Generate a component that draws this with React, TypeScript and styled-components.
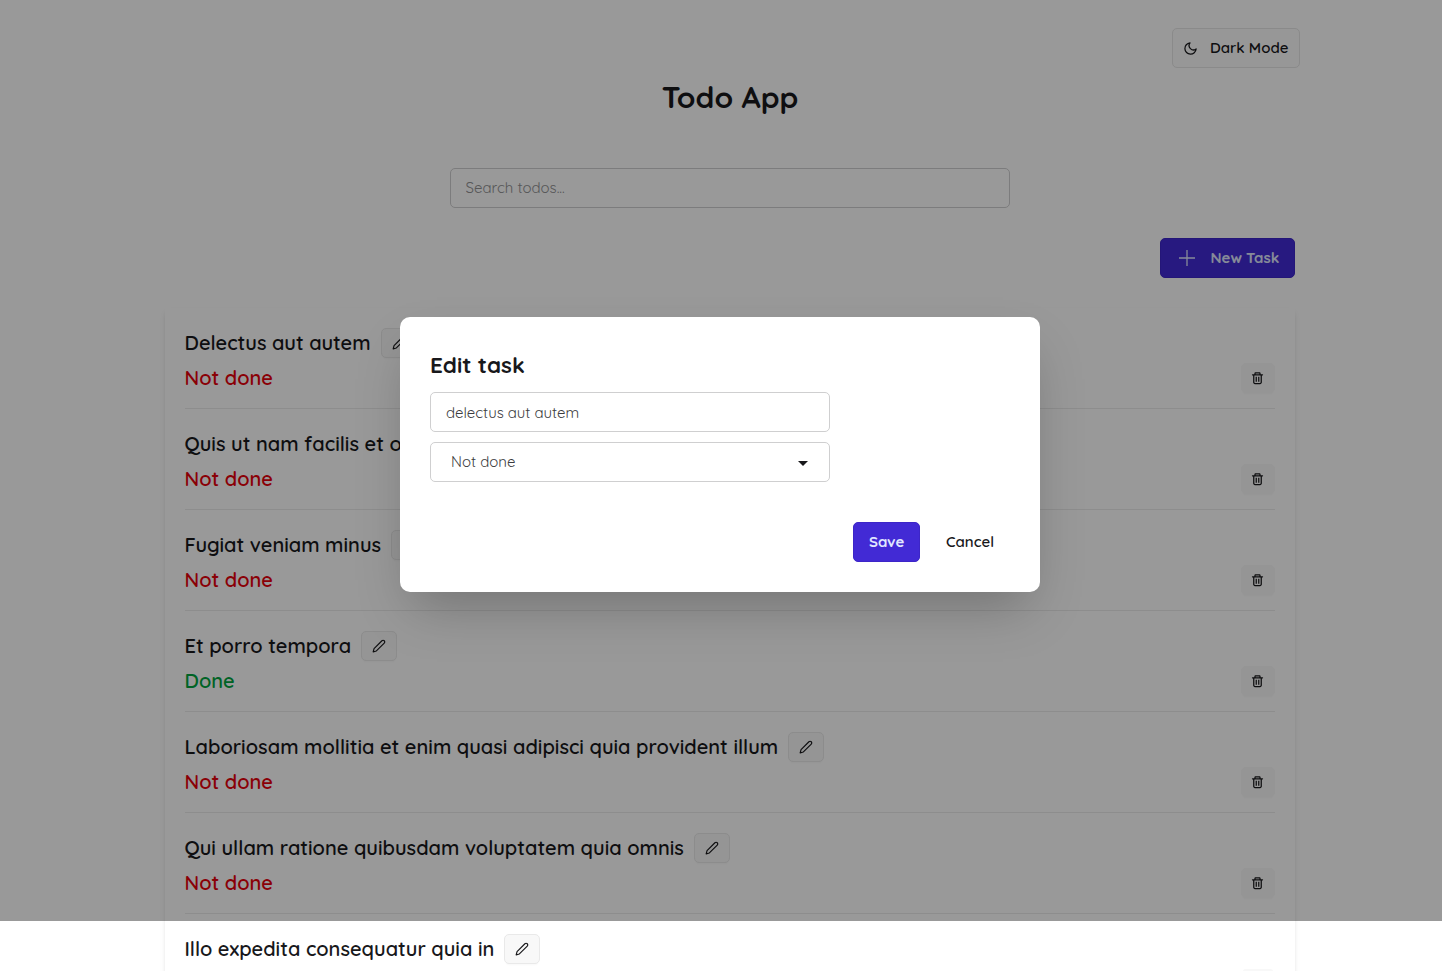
import React from "react";
import styled, { createGlobalStyle } from "styled-components";
import { FiMoon, FiEdit2 } from "react-icons/fi";
import { CgTrash } from "react-icons/cg";

const GlobalStyle = createGlobalStyle`
  *, *::before, *::after { box-sizing: border-box; }
  body {
    margin: 0;
    background: #ffffff;
    color: #18181b;
    font-family: Quicksand, Lato, sans-serif;
  }
  button, input { font-family: inherit; }
`;

const Page = styled.div`
  position: relative;
  height: 971px;
  overflow: hidden;
`;

const Content = styled.main`
  width: 1140px;
  margin-left: 160px;
  padding-top: 28px;
  display: flex;
  flex-direction: column;
`;

const Text = styled.span`
  white-space: nowrap;
`;

const Button = styled.button`
  height: 40px;
  display: inline-flex;
  align-items: center;
  border: 1px solid #e9e9e9;
  border-radius: 5px;
  background: #f8f8f8;
  color: #18181b;
  font-size: 15px;
  font-weight: 600;
  line-height: 20px;
`;

const ThemeButton = styled(Button)`
  width: 128px;
  padding: 0 0 0 10px;
  gap: 12px;
  align-self: flex-end;
  background: #fcfcfc;
  border-color: #e6e6e6;
`;

const PrimaryButton = styled(Button)<{ $width: number }>`
  width: ${({ $width }) => $width}px;
  padding: 0 0 0 15px;
  gap: 12.5px;
  background: #422ad5;
  border-color: #3d26c8;
  color: #e0e7ff;
  font-weight: 700;
`;

const PlainButton = styled(Button)`
  padding: 0 15px;
  background: transparent;
  border-color: transparent;
`;

const Heading = styled.h1`
  margin: 9px 0 1px;
  height: 40px;
  text-align: center;
  font-size: 30px;
  font-weight: 700;
  line-height: 40px;
`;

const Field = styled.input<{ $width: number }>`
  width: ${({ $width }) => $width}px;
  height: 40px;
  padding: 0 15px;
  border: 1px solid #cfcfd0;
  border-radius: 5px;
  background: transparent;
  color: #3c3c40;
  font-size: 15px;
  outline: none;
  &::placeholder { color: #919193; opacity: 1; }
`;

const SearchField = styled(Field)`
  padding: 0 14.5px 2px;
`;

const SearchRow = styled.div`
  display: flex;
  justify-content: center;
  margin-top: 50px;
`;

const ActionRow = styled.div`
  display: flex;
  justify-content: flex-end;
  margin: 30px 5px 0;
`;

const List = styled.ul`
  list-style: none;
  margin: 30px 5px 0;
  padding: 0 20px;
  box-shadow: 0 4px 6px -1px #0000001a, 0 2px 4px -2px #0000001a;
`;

const Item = styled.li`
  height: 101px;
  padding-top: 20px;
  border-bottom: 1px solid #ececec;
`;

const ItemRow = styled.div<{ $spread?: boolean }>`
  display: flex;
  align-items: center;
  height: 30px;
  gap: 10px;
  font-size: 20px;
  font-weight: 600;
  margin-top: ${({ $spread }) => ($spread ? 5 : 0)}px;
  justify-content: ${({ $spread }) => ($spread ? "space-between" : "flex-start")};
`;

const ItemText = styled(Text)`
  margin-left: -0.5px;
  padding-bottom: 2px;
`;

const Status = styled(ItemText)<{ $done?: boolean }>`
  color: ${({ $done }) => ($done ? "#00a63e" : "#e7000b")};
`;

const IconButton = styled.button<{ $quiet?: boolean }>`
  width: ${({ $quiet }) => ($quiet ? 34 : 36)}px;
  height: 30px;
  padding: ${({ $quiet }) => ($quiet ? "0 1px 0 0" : "0")};
  display: flex;
  align-items: center;
  justify-content: center;
  border: 1px solid ${({ $quiet }) => ($quiet ? "#f8f8f8" : "#e9e9e9")};
  border-radius: 5px;
  background: #f8f8f8;
  color: #18181b;
  box-shadow: 0 3px 2px -2px #00000008;
`;

const Backdrop = styled.div`
  position: absolute;
  inset: 0 0 50px;
  background: #00000066;
`;

const Dialog = styled.section`
  position: absolute;
  top: 317px;
  left: 400px;
  width: 640px;
  height: 275px;
  padding: 30px;
  border-radius: 10px;
  background: #ffffff;
  box-shadow: 0 25px 50px -12px #00000040;
  display: flex;
  flex-direction: column;
`;

const DialogTitle = styled.h2`
  margin: 0 0 10px;
  font-size: 22.5px;
  font-weight: 700;
  line-height: 35px;
`;

const Select = styled.div`
  width: 400px;
  height: 40px;
  margin-top: 10px;
  padding: 0 21px 2px 20px;
  display: flex;
  align-items: center;
  justify-content: space-between;
  border: 1px solid #cfcfd0;
  border-radius: 5px;
  color: #3c3c40;
  font-size: 15px;
`;

const Caret = styled.i`
  margin-top: 4px;
  border: solid transparent;
  border-width: 5px 5px 0;
  border-top-color: #18181b;
`;

const DialogActions = styled.div`
  display: flex;
  justify-content: flex-end;
  gap: 10px;
  margin-top: 40px;
`;

const PlusIcon = () => (
  <svg width="22" height="22" viewBox="0 0 22 22" stroke="currentColor" strokeWidth="1.3" fill="none">
    <path d="M3 11h16M11 3v16" />
  </svg>
);

interface Todo {
  title: string;
  done?: boolean;
}

const todos: Todo[] = [
  { title: "Delectus aut autem" },
  { title: "Quis ut nam facilis et officia qui" },
  { title: "Fugiat veniam minus" },
  { title: "Et porro tempora", done: true },
  { title: "Laboriosam mollitia et enim quasi adipisci quia provident illum" },
  { title: "Qui ullam ratione quibusdam voluptatem quia omnis" },
  { title: "Illo expedita consequatur quia in" },
];

const TodoItem = ({ title, done }: Todo) => (
  <Item>
    <ItemRow>
      <ItemText>{title}</ItemText>
      <IconButton aria-label="Edit"><FiEdit2 size={14} /></IconButton>
    </ItemRow>
    <ItemRow $spread>
      <Status $done={done}>{done ? "Done" : "Not done"}</Status>
      <IconButton $quiet aria-label="Delete"><CgTrash size={15} /></IconButton>
    </ItemRow>
  </Item>
);

export default function App() {
  return (
    <Page>
      <GlobalStyle />
      <Content>
        <ThemeButton><FiMoon size={15} /><Text>Dark Mode</Text></ThemeButton>
        <Heading>Todo App</Heading>
        <SearchRow><SearchField $width={560} placeholder="Search todos..." /></SearchRow>
        <ActionRow>
          <PrimaryButton $width={135}><PlusIcon /><Text>New Task</Text></PrimaryButton>
        </ActionRow>
        <List>{todos.map((todo) => <TodoItem key={todo.title} {...todo} />)}</List>
      </Content>
      <Backdrop />
      <Dialog>
        <DialogTitle>Edit task</DialogTitle>
        <Field $width={400} defaultValue="delectus aut autem" />
        <Select><Text>Not done</Text><Caret /></Select>
        <DialogActions>
          <PrimaryButton $width={67}><Text>Save</Text></PrimaryButton>
          <PlainButton><Text>Cancel</Text></PlainButton>
        </DialogActions>
      </Dialog>
    </Page>
  );
}
